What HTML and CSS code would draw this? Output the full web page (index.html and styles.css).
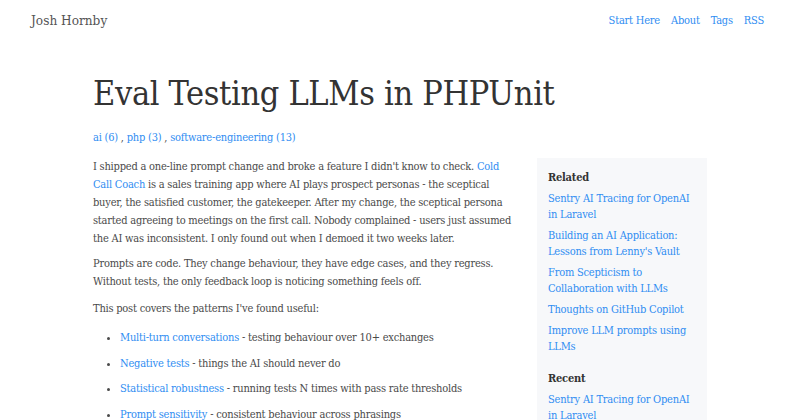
FILE: index.html
```html
<!DOCTYPE html>
<html lang="en">
<head>
<meta charset="utf-8">
<title>Eval Testing LLMs in PHPUnit</title>
<link rel="stylesheet" href="styles.css">
</head>
<body>
<header class="site-header">
  <a class="brand" href="#">Josh Hornby</a>
  <nav class="nav">
    <a href="#">Start Here</a>
    <a href="#">About</a>
    <a href="#">Tags</a>
    <a href="#">RSS</a>
  </nav>
</header>
<main class="container">
  <h1 class="title">Eval Testing LLMs in PHPUnit</h1>
  <div class="tags"><a href="#">ai (6)</a> , <a href="#">php (3)</a> , <a href="#">software-engineering (13)</a></div>
  <div class="layout">
    <article class="post">
      <p>I shipped a one-line prompt change and broke a feature I didn't know to check. <a href="#">Cold Call Coach</a> is a sales training app where AI plays prospect personas - the sceptical buyer, the satisfied customer, the gatekeeper. After my change, the sceptical persona started agreeing to meetings on the first call. Nobody complained - users just assumed the AI was inconsistent. I only found out when I demoed it two weeks later.</p>
      <p>Prompts are code. They change behaviour, they have edge cases, and they regress. Without tests, the only feedback loop is noticing something feels off.</p>
      <p>This post covers the patterns I've found useful:</p>
      <ul class="list">
        <li><a href="#">Multi-turn conversations</a> - testing behaviour over 10+ exchanges</li>
        <li><a href="#">Negative tests</a> - things the AI should never do</li>
        <li><a href="#">Statistical robustness</a> - running tests N times with pass rate thresholds</li>
        <li><a href="#">Prompt sensitivity</a> - consistent behaviour across phrasings</li>
      </ul>
    </article>
    <aside class="sidebar">
      <h3 class="side-title">Related</h3>
      <ul class="side-list">
        <li><a href="#">Sentry AI Tracing for OpenAI in Laravel</a></li>
        <li><a href="#">Building an AI Application: Lessons from Lenny's Vault</a></li>
        <li><a href="#">From Scepticism to Collaboration with LLMs</a></li>
        <li><a href="#">Thoughts on GitHub Copilot</a></li>
        <li><a href="#">Improve LLM prompts using LLMs</a></li>
      </ul>
      <h3 class="side-title recent">Recent</h3>
      <ul class="side-list">
        <li><a href="#">Sentry AI Tracing for OpenAI in Laravel</a></li>
        <li><a href="#">Eval Testing LLMs in PHPUnit</a></li>
      </ul>
    </aside>
  </div>
</main>
</body>
</html>
```

FILE: styles.css
```css
* { box-sizing: border-box; }
html, body { margin: 0; padding: 0; background: #fff; }
body {
  font-family: "DejaVu Serif Condensed", "DejaVu Serif", "Liberation Serif", serif;
  font-stretch: semi-condensed;
  color: #4a4a4a;
  font-size: 11px;
  letter-spacing: -0.22px;
}
a { color: #2f8df2; text-decoration: none; }

.site-header {
  display: flex;
  justify-content: space-between;
  align-items: center;
  padding: 11px 36px 0 31px;
  height: 29px;
}
.brand { color: #555; font-size: 13.5px; letter-spacing: 0; }
.nav { display: flex; gap: 11px; font-size: 11px; }

.container {
  width: 614px;
  margin: 0 auto;
  padding-top: 42px;
}
.title {
  font-size: 34px;
  font-weight: normal;
  color: #333;
  margin: 0;
  line-height: 44px;
  letter-spacing: -0.35px;
}
.tags { margin-top: 16px; font-size: 11px; }

.layout {
  display: grid;
  grid-template-columns: 1fr 170px;
  gap: 20px;
  margin-top: 14px;
  align-items: start;
}
.post p { margin: 0 0 7px; line-height: 18px; }
.post p + p + p { margin-top: 9px; }
.list { margin: 11px 0 0; padding-left: 27px; }
.list li { line-height: 18px; margin-bottom: 7.5px; }

.sidebar {
  background: #f7f8fa;
  padding: 12px 11px 20px;
}
.side-title { font-size: 11px; font-weight: bold; color: #333; margin: 0 0 5px; line-height: 16px; }
.side-title.recent { margin-top: 16px; }
.side-list { list-style: none; margin: 0; padding: 0; }
.side-list li { line-height: 16px; margin-bottom: 5px; font-size: 11px; }
```
